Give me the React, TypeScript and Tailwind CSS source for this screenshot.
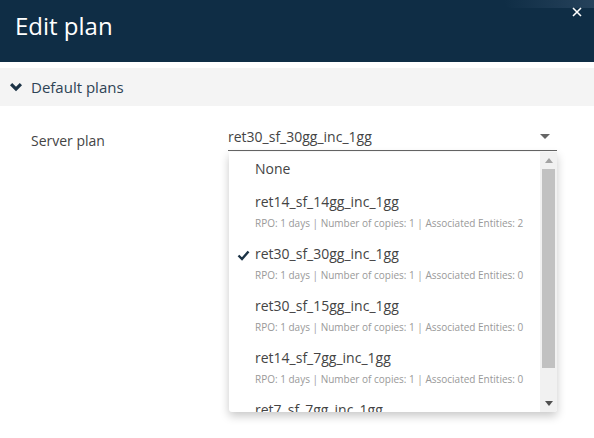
import React from "react";

const items = [
  { name: "ret14_sf_14gg_inc_1gg", sub: "RPO: 1 days | Number of copies: 1 | Associated Entities: 2" },
  { name: "ret30_sf_30gg_inc_1gg", sub: "RPO: 1 days | Number of copies: 1 | Associated Entities: 0", checked: true },
  { name: "ret30_sf_15gg_inc_1gg", sub: "RPO: 1 days | Number of copies: 1 | Associated Entities: 0" },
  { name: "ret14_sf_7gg_inc_1gg", sub: "RPO: 1 days | Number of copies: 1 | Associated Entities: 0" },
  { name: "ret7_sf_7gg_inc_1gg", sub: "RPO: 1 days | Number of copies: 1 | Associated Entities: 0" },
];

export default function App() {
  return (
    <div className="w-[594px] h-[438px] bg-white overflow-hidden relative" style={{ fontFamily: '"Open Sans", sans-serif' }}>
      <div className="h-[62px] bg-[#0f2d45] relative flex items-center pl-[15px]">
        <div className="absolute right-0 top-0 w-[90px] h-[8px] bg-gradient-to-l from-[#35506a] to-transparent opacity-60 rounded-bl-full" />
        <span className="text-white text-[24px] leading-none -mt-[10px]">Edit plan</span>
        <svg className="absolute right-[12px] top-[7px]" width="10" height="10" viewBox="0 0 10 10">
          <path d="M1 1 L9 9 M9 1 L1 9" stroke="white" strokeWidth="1.6" />
        </svg>
      </div>
      <div className="h-[6px]" />
      <div className="h-[38px] bg-[#f4f4f4] flex items-center pl-[10px] text-[#2e4355]">
        <svg width="12" height="9" viewBox="0 0 12 9" className="mr-[9px] mt-[1px]">
          <path d="M0 2.2 L2.2 0 L6 3.8 L9.8 0 L12 2.2 L6 8.2 Z" fill="#1c3346" />
        </svg>
        <span className="text-[15px] leading-none">Default plans</span>
      </div>
      <div className="flex pt-[19px]">
        <div className="w-[228px] pl-[31px] text-[14px] text-[#444] leading-none pt-[9px]">Server plan</div>
        <div className="w-[329px] relative">
          <div className="h-[26px] border-b border-[#666] flex items-center justify-between text-[14px] text-[#444]">
            <span className="-mt-[2px]">ret30_sf_30gg_inc_1gg</span>
            <svg width="10" height="6" viewBox="0 0 10 6" className="mr-[7px] -mt-[2px]">
              <path d="M0 0 L10 0 L5 5 Z" fill="#666" />
            </svg>
          </div>
          <div className="absolute left-[1px] top-[27px] w-[328px] h-[260px] bg-white shadow-[0_4px_10px_rgba(0,0,0,0.22)] rounded-b-[3px] flex overflow-hidden">
            <div className="flex-1 overflow-hidden">
              <div className="h-[33px] flex items-center pl-[26px] text-[14px] text-[#444]">None</div>
              {items.map((it) => (
                <div key={it.name} className="h-[52px] relative pl-[26px] pt-[7px]">
                  {it.checked && (
                    <svg className="absolute left-[8px] top-[13px]" width="13" height="11" viewBox="0 0 13 11">
                      <path d="M1.5 5.5 L5 9 L11.5 1.5" stroke="#1c3346" strokeWidth="2.4" fill="none" />
                    </svg>
                  )}
                  <div className="text-[14px] text-[#444] leading-[20px]">{it.name}</div>
                  <div className="text-[10px] text-[#999] leading-[14px] mt-[4px] whitespace-nowrap">{it.sub}</div>
                </div>
              ))}
            </div>
            <div className="w-[17px] bg-[#f1f1f1] flex flex-col items-center">
              <div className="h-[17px] flex items-center justify-center">
                <svg width="8" height="5" viewBox="0 0 8 5"><path d="M0 5 L8 5 L4 0 Z" fill="#a3a3a3" /></svg>
              </div>
              <div className="w-[13px] h-[199px] bg-[#c1c1c1]" />
              <div className="flex-1" />
              <div className="h-[17px] flex items-center justify-center">
                <svg width="8" height="5" viewBox="0 0 8 5"><path d="M0 0 L8 0 L4 5 Z" fill="#505050" /></svg>
              </div>
            </div>
          </div>
        </div>
      </div>
    </div>
  );
}
